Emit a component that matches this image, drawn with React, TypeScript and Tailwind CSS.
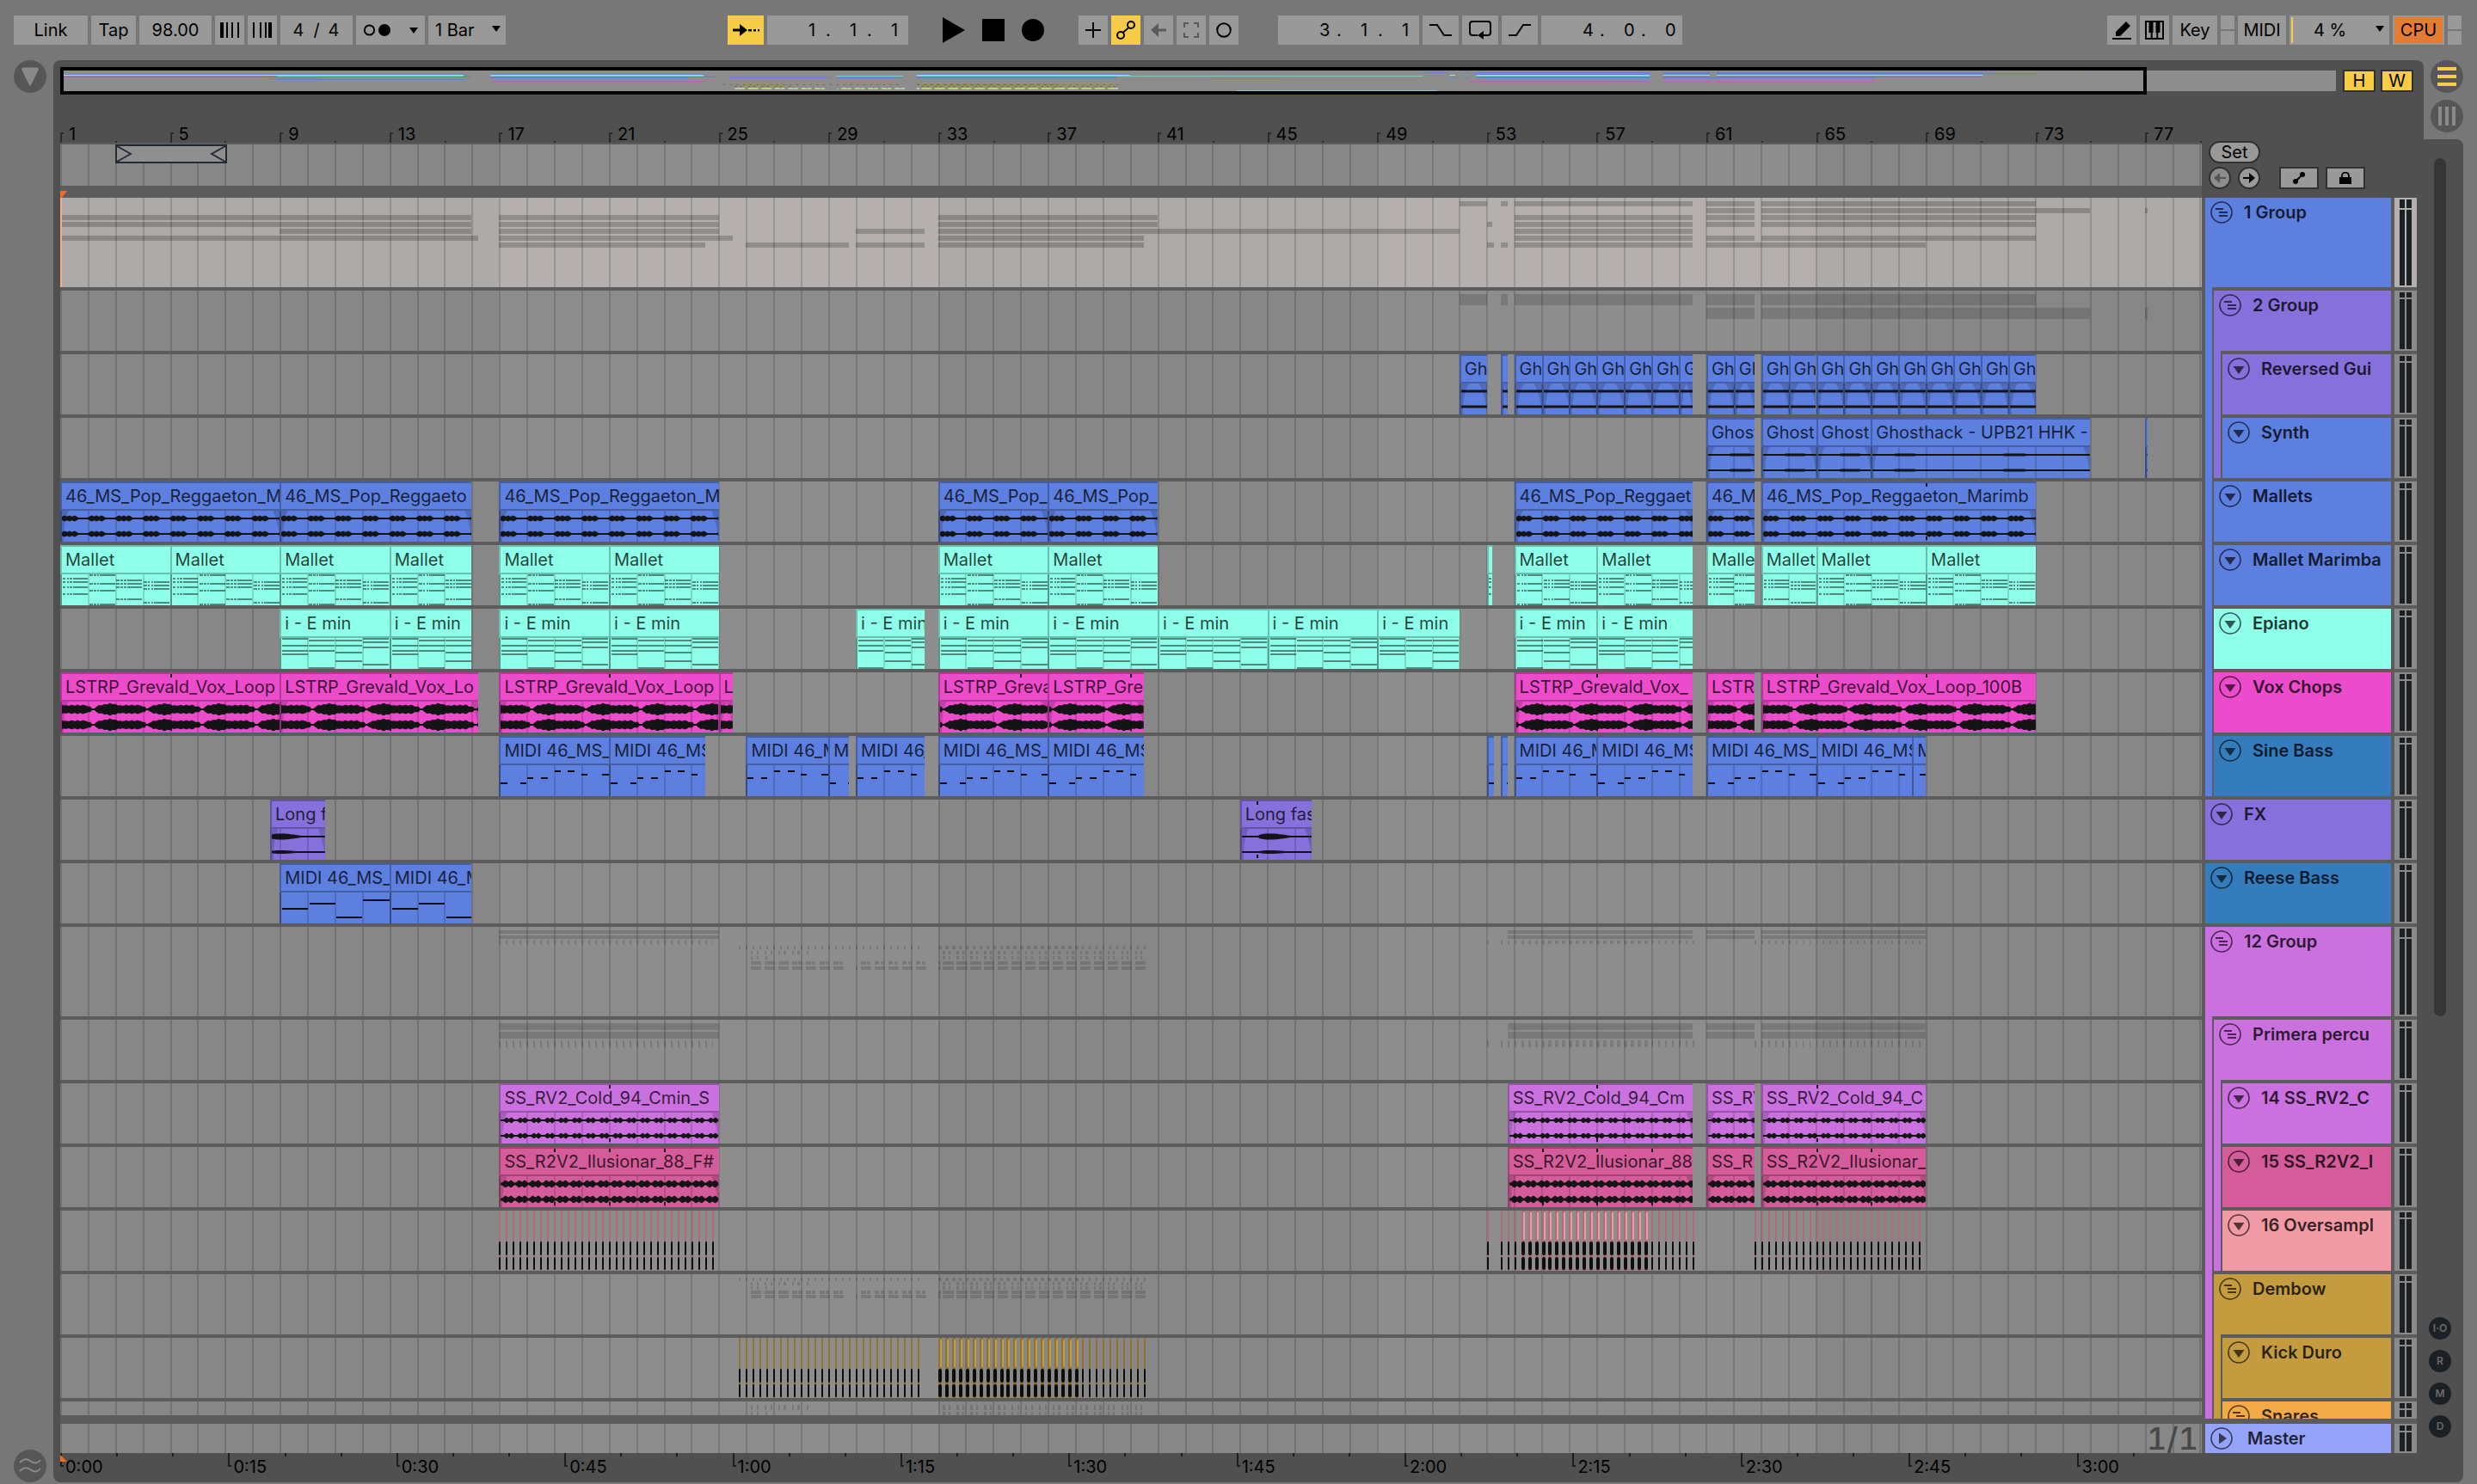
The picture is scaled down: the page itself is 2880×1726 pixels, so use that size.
import React from "react";

type ClipKind =
  | "mallets"
  | "vox"
  | "voxLate"
  | "fade"
  | "fadeLate"
  | "reversed"
  | "synth"
  | "beads"
  | "beadsLoud"
  | "marimba"
  | "epiano"
  | "sine"
  | "reese";

interface Clip {
  start: number;
  end: number;
  title: string;
  kind: ClipKind;
  marks?: number[];
}

interface Hit {
  at: number;
  fat?: boolean;
}

interface Track {
  id: string;
  name: string;
  color: string;
  level: 0 | 1 | 2;
  // colours of the parent groups, drawn as strips on the left
  parents?: string[];
  group?: boolean;
  tall?: boolean;
  selected?: boolean;
  clips?: Clip[];
  hits?: Hit[];
  hitColors?: [string, string];
  // ids of the tracks summed up in a group lane
  summary?: string[];
  summaryPitch?: number;
  summaryHeight?: number;
}

// bars in view, the last one is only just visible
const BARS = 78.06;
const PX = 32;

const BLUE = "#5d7fdf";
const VIOLET = "#8670dc";
const AQUA = "#8effe8";
const MAGENTA = "#ec4bcb";
const STEEL = "#357cbd";
const ORCHID = "#ca71df";
const ROSE = "#d45c9b";
const SALMON = "#f09aa5";
const GOLD = "#c49c3f";
const ORANGE = "#f2aa48";

const pct = (bars: number) => `${(bars / BARS) * 100}%`;

const clip = (
  start: number,
  end: number,
  title: string,
  kind: ClipKind,
  marks?: number[]
): Clip => ({ start, end, title, kind, marks });

const everyBar = (from: number, to: number, last: number): Clip[] => {
  const list: Clip[] = [];
  for (let b = from; b < to; b++) {
    list.push(clip(b, b === to - 1 ? last : b + 1, "Gh", "reversed"));
  }
  return list;
};

const range = (from: number, to: number, fat = false): Hit[] => {
  const list: Hit[] = [];
  for (let t = from; t <= to + 0.001; t += 0.25) list.push({ at: t, fat });
  return list;
};

const tracks: Track[] = [
  {
    id: "g1",
    name: "1 Group",
    color: BLUE,
    level: 0,
    group: true,
    tall: true,
    selected: true,
    summary: ["rev", "synth", "mallets", "marimba", "epiano", "vox", "sine"],
    summaryPitch: 8,
    summaryHeight: 6,
  },
  {
    id: "g2",
    name: "2 Group",
    color: VIOLET,
    level: 1,
    parents: [BLUE],
    group: true,
    summary: ["rev", "synth"],
    summaryPitch: 16,
    summaryHeight: 13,
  },
  {
    id: "rev",
    name: "Reversed Gui",
    color: VIOLET,
    level: 2,
    parents: [BLUE, VIOLET],
    clips: [
      clip(51, 52, "Gh", "reversed"),
      clip(52.5, 52.75, "", "reversed"),
      ...everyBar(53, 60, 59.5),
      ...everyBar(60, 62, 61.75),
      ...everyBar(62, 72, 72),
    ],
  },
  {
    id: "synth",
    name: "Synth",
    color: BLUE,
    level: 2,
    parents: [BLUE, VIOLET],
    clips: [
      clip(60, 61.75, "Ghost", "synth"),
      clip(62, 64, "Ghost", "synth"),
      clip(64, 66, "Ghost", "synth"),
      clip(66, 74, "Ghosthack - UPB21 HHK -", "synth"),
      clip(76, 76.08, "", "synth"),
    ],
  },
  {
    id: "mallets",
    name: "Mallets",
    color: BLUE,
    level: 1,
    parents: [BLUE],
    clips: [
      clip(0, 8, "46_MS_Pop_Reggaeton_M", "mallets"),
      clip(8, 15, "46_MS_Pop_Reggaeto", "mallets"),
      clip(16, 24, "46_MS_Pop_Reggaeton_M", "mallets"),
      clip(32, 36, "46_MS_Pop_", "mallets"),
      clip(36, 40, "46_MS_Pop_", "mallets"),
      clip(53, 59.5, "46_MS_Pop_Reggaet", "mallets"),
      clip(60, 61.75, "46_M", "mallets"),
      clip(62, 72, "46_MS_Pop_Reggaeton_Marimb", "mallets", [68]),
    ],
  },
  {
    id: "marimba",
    name: "Mallet Marimba",
    color: BLUE,
    level: 1,
    parents: [BLUE],
    clips: [
      clip(0, 4, "Mallet", "marimba"),
      clip(4, 8, "Mallet", "marimba"),
      clip(8, 12, "Mallet", "marimba"),
      clip(12, 15, "Mallet", "marimba"),
      clip(16, 20, "Mallet", "marimba"),
      clip(20, 24, "Mallet", "marimba"),
      clip(32, 36, "Mallet", "marimba"),
      clip(36, 40, "Mallet", "marimba"),
      clip(52, 52.2, "", "marimba"),
      clip(53, 56, "Mallet", "marimba"),
      clip(56, 59.5, "Mallet", "marimba"),
      clip(60, 61.75, "Malle", "marimba"),
      clip(62, 64, "Mallet", "marimba"),
      clip(64, 68, "Mallet", "marimba"),
      clip(68, 72, "Mallet", "marimba"),
    ],
  },
  {
    id: "epiano",
    name: "Epiano",
    color: AQUA,
    level: 1,
    parents: [BLUE],
    clips: [
      clip(8, 12, "i - E min", "epiano"),
      clip(12, 15, "i - E min", "epiano"),
      clip(16, 20, "i - E min", "epiano"),
      clip(20, 24, "i - E min", "epiano"),
      clip(29, 31.5, "i - E min", "epiano"),
      clip(32, 36, "i - E min", "epiano"),
      clip(36, 40, "i - E min", "epiano"),
      clip(40, 44, "i - E min", "epiano"),
      clip(44, 48, "i - E min", "epiano"),
      clip(48, 51, "i - E min", "epiano"),
      clip(53, 56, "i - E min", "epiano"),
      clip(56, 59.5, "i - E min", "epiano"),
    ],
  },
  {
    id: "vox",
    name: "Vox Chops",
    color: MAGENTA,
    level: 1,
    parents: [BLUE],
    clips: [
      clip(0, 8, "LSTRP_Grevald_Vox_Loop", "vox", [4]),
      clip(8, 15.25, "LSTRP_Grevald_Vox_Lo", "vox", [12]),
      clip(16, 24, "LSTRP_Grevald_Vox_Loop", "vox", [20]),
      clip(24, 24.5, "L", "vox"),
      clip(32, 36, "LSTRP_Greva", "voxLate", [35]),
      clip(36, 39.5, "LSTRP_Gre", "voxLate", [39]),
      clip(53, 59.5, "LSTRP_Grevald_Vox_", "voxLate", [56]),
      clip(60, 61.75, "LSTR", "vox"),
      clip(62, 72, "LSTRP_Grevald_Vox_Loop_100B", "vox", [64, 68]),
    ],
  },
  {
    id: "sine",
    name: "Sine Bass",
    color: STEEL,
    level: 1,
    parents: [BLUE],
    clips: [
      clip(16, 20, "MIDI 46_MS_", "sine"),
      clip(20, 23.5, "MIDI 46_MS", "sine"),
      clip(25, 28, "MIDI 46_M", "sine"),
      clip(28, 28.75, "M", "sine"),
      clip(29, 31.5, "MIDI 46_", "sine"),
      clip(32, 36, "MIDI 46_MS_", "sine"),
      clip(36, 39.5, "MIDI 46_MS", "sine"),
      clip(52, 52.25, "", "sine"),
      clip(52.5, 52.75, "", "sine"),
      clip(53, 56, "MIDI 46_M", "sine"),
      clip(56, 59.5, "MIDI 46_MS", "sine"),
      clip(60, 64, "MIDI 46_MS_", "sine"),
      clip(64, 67.5, "MIDI 46_MS", "sine"),
      clip(67.5, 68, "M", "sine"),
    ],
  },
  {
    id: "fx",
    name: "FX",
    color: VIOLET,
    level: 0,
    clips: [
      clip(7.65, 9.65, "Long f", "fade"),
      clip(43, 45.6, "Long fas", "fadeLate", [43.6]),
    ],
  },
  {
    id: "reese",
    name: "Reese Bass",
    color: STEEL,
    level: 0,
    clips: [
      clip(8, 12, "MIDI 46_MS_", "reese"),
      clip(12, 15, "MIDI 46_M", "reese"),
    ],
  },
  {
    id: "g12",
    name: "12 Group",
    color: ORCHID,
    level: 0,
    group: true,
    tall: true,
    summary: ["cold", "ilu", "over", "kick", "snare", "rim", "hat", "shaker"],
    summaryPitch: 6,
    summaryHeight: 4,
  },
  {
    id: "primera",
    name: "Primera percu",
    color: ORCHID,
    level: 1,
    parents: [ORCHID],
    group: true,
    summary: ["cold", "ilu", "over"],
    summaryPitch: 10,
    summaryHeight: 8,
  },
  {
    id: "cold",
    name: "14 SS_RV2_C",
    color: ORCHID,
    level: 2,
    parents: [ORCHID, ORCHID],
    clips: [
      clip(16, 24, "SS_RV2_Cold_94_Cmin_S", "beads", [20]),
      clip(52.75, 59.5, "SS_RV2_Cold_94_Cm", "beads", [56]),
      clip(60, 61.75, "SS_RV", "beads"),
      clip(62, 68, "SS_RV2_Cold_94_C", "beads", [64]),
    ],
  },
  {
    id: "ilu",
    name: "15 SS_R2V2_I",
    color: ROSE,
    level: 2,
    parents: [ORCHID, ORCHID],
    clips: [
      clip(16, 24, "SS_R2V2_Ilusionar_88_F#", "beadsLoud", [18, 20, 22]),
      clip(52.75, 59.5, "SS_R2V2_Ilusionar_88", "beadsLoud", [54, 56, 58]),
      clip(60, 61.75, "SS_R2", "beadsLoud"),
      clip(62, 68, "SS_R2V2_Ilusionar_", "beadsLoud", [64, 66]),
    ],
  },
  {
    id: "over",
    name: "16 Oversampl",
    color: SALMON,
    level: 2,
    parents: [ORCHID, ORCHID],
    hitColors: ["#b46b78", "#f09aa5"],
    hits: [
      ...range(16, 23.75),
      { at: 52 },
      ...range(52.5, 53),
      ...range(53.25, 57.75, true),
      ...range(58, 59.5),
      ...range(61.75, 67.75),
    ],
  },
  {
    id: "dembow",
    name: "Dembow",
    color: GOLD,
    level: 1,
    parents: [ORCHID],
    group: true,
    summary: ["kick", "snare", "rim", "hat", "shaker"],
    summaryPitch: 5,
    summaryHeight: 4,
  },
  {
    id: "kick",
    name: "Kick Duro",
    color: GOLD,
    level: 2,
    parents: [ORCHID, GOLD],
    hitColors: ["#93722f", "#c49c3f"],
    hits: [...range(24.75, 31.25), ...range(32, 37, true), ...range(37.25, 39.5)],
  },
];

const snares: Track = {
  id: "snares",
  name: "Snares",
  color: ORANGE,
  level: 2,
  parents: [ORCHID, GOLD],
  group: true,
  summary: ["snare", "rim"],
  summaryPitch: 8,
  summaryHeight: 6,
};

// Blocks of the lanes that are scrolled out of view, still seen in summaries
const pairs = (from: number, count: number): number[][] =>
  Array.from({ length: count }, (_, i) => [
    [from + i * 0.5, from + i * 0.5 + 0.07],
    [from + i * 0.5 + 0.2, from + i * 0.5 + 0.27],
  ]).flat();

const blocks = (from: number, count: number): number[][] =>
  Array.from({ length: count }, (_, i) => [
    from + i * 0.5,
    from + i * 0.5 + 0.38,
  ]);

const splitBlocks = (from: number, count: number): number[][] =>
  Array.from({ length: count }, (_, i) => [
    [from + i * 0.5, from + i * 0.5 + 0.18],
    [from + i * 0.5 + 0.23, from + i * 0.5 + 0.36],
  ]).flat();

const hidden: Record<string, number[][]> = {
  snare: [...pairs(25.18, 4), [27.2, 27.27], ...pairs(32.18, 15)],
  rim: [...pairs(25.18, 1), [25.7, 25.77], ...pairs(32.18, 15)],
  hat: [
    ...blocks(25.18, 3),
    ...splitBlocks(26.68, 4),
    ...splitBlocks(29.18, 5),
    [32, 32.1],
    ...blocks(32.18, 15),
  ],
  shaker: [
    ...blocks(25.18, 7),
    [29, 29.07],
    ...blocks(29.18, 5),
    [32, 32.1],
    ...blocks(32.18, 15),
  ],
};

// Clips of one track joined into the spans that a group lane shows
const spansOf = (id: string): number[][] => {
  if (hidden[id]) return hidden[id];
  const track = tracks.find((t) => t.id === id);
  if (!track) return [];
  if (track.hits) {
    return track.hits.map((h) => [h.at, h.at + (h.fat ? 0.12 : 0.06)]);
  }
  const spans: number[][] = [];
  (track.clips ?? []).forEach((c) => {
    const last = spans[spans.length - 1];
    if (last && last[1] === c.start) last[1] = c.end;
    else spans.push([c.start, c.end]);
  });
  return spans;
};

const clipColor = (kind: ClipKind): string => {
  if (kind === "marimba" || kind === "epiano") return AQUA;
  if (kind === "vox" || kind === "voxLate") return MAGENTA;
  if (kind === "fade" || kind === "fadeLate") return VIOLET;
  if (kind === "beads") return ORCHID;
  if (kind === "beadsLoud") return ROSE;
  return BLUE;
};

const voxLevel = (u: number, offset: number): number => {
  const v = (((u - offset) % 2) + 2) % 2;
  const rough = Math.sin(v * 31) * 0.6;
  if (v < 0.1 || v > 1.96) return 1;
  if (v < 0.25) return 2 + (v - 0.1) * 16;
  if (v < 0.7) return 4.4 + (v - 0.25) * 5.5 + rough;
  if (v < 1.15) return 6.8 - (v - 0.7) * 7 + rough;
  if (v < 1.8) return 4.8 + rough;
  return 3.2;
};

// fast rise, slow decay
const swell = (x: number): number =>
  x <= 0 || x >= 1 ? 1 : 1 + 2.6 * Math.sin(Math.PI * Math.pow(x, 0.7));

const level = (kind: ClipKind, u: number): number => {
  const f = u % 1;
  switch (kind) {
    case "mallets":
      return f < 0.56 ? 1.8 + 1.6 * Math.abs(Math.sin(f * 17)) : 1;
    case "vox":
      return voxLevel(u, 1.1);
    case "voxLate":
      return voxLevel(u, 0.1);
    case "fade":
      return swell((u + 0.1) / 1.2);
    case "fadeLate":
      return swell((u - 0.6) / 1.2);
    case "reversed":
      return 1.5;
    case "synth":
      return u % 4 > 0.8 && u % 4 < 1.6 ? 1.6 : 1;
    case "beads": {
      const g = u % 0.5;
      return g > 0.14 && g < 0.48
        ? 1 + 2.4 * Math.abs(Math.sin((g - 0.14) * 18.5))
        : 1;
    }
    case "beadsLoud": {
      const g = u % 0.5;
      return g > 0.08 && g < 0.48
        ? 1.6 + 2.8 * Math.abs(Math.sin((g - 0.08) * 15.7))
        : 1.6;
    }
    default:
      return 1;
  }
};

const wavePath = (
  kind: ClipKind,
  length: number,
  mid: number,
  gain = 1
): string => {
  const steps = Math.max(2, Math.round(length * 20));
  const top: string[] = [];
  const bottom: string[] = [];
  for (let i = 0; i <= steps; i++) {
    const u = (i / steps) * length;
    const a = Math.max(1, level(kind, u) * gain);
    top.push(`${(u * PX).toFixed(1)},${(mid - a).toFixed(1)}`);
    bottom.unshift(`${(u * PX).toFixed(1)},${(mid + a).toFixed(1)}`);
  }
  return `M${top.join("L")}L${bottom.join("L")}Z`;
};

const marimbaRows = [
  [4, 8, 14, 22],
  [0, 10, 18, 34],
  [6, 10, 14, 28],
  [8, 12, 16, 32],
];
const epianoRows = [
  [0, 8, 14, 18],
  [2, 8, 14, 34],
  [2, 8, 16, 26],
  [0, 4, 10, 30],
];
const sineRows = [20, 14, 6, 10];
const sineSteps = [
  [0, 0.25, 0.72, 0.97],
  [0, 0.22, 0.5, 0.75],
  [0, 0.22, 0.5, 0.75],
  [0, 0.22, 0.75, 1],
];
const reeseRows = [18, 12, 28, 8];

// [x, y, width] in bars and pixels, relative to the clip
const notesOf = (c: Clip): number[][] => {
  const notes: number[][] = [];
  for (let b = Math.floor(c.start); b < c.end; b++) {
    const x = b - c.start;
    const phase = b % 4;
    if (c.kind === "marimba") {
      marimbaRows[phase].forEach((y) => {
        notes.push([x + 0.02, y, 0.12], [x + 0.18, y, 0.08]);
        notes.push([x + 0.3, y, 0.08], [x + 0.41, y, 0.56]);
      });
    } else if (c.kind === "epiano") {
      epianoRows[phase].forEach((y) => notes.push([x + 0.02, y, 0.96]));
    } else if (c.kind === "sine") {
      const s = sineSteps[phase];
      notes.push([x + s[0], sineRows[phase], s[1] - s[0]]);
      notes.push([x + s[2], sineRows[phase], s[3] - s[2]]);
    } else {
      notes.push([x + 0.04, reeseRows[phase], 0.96]);
    }
  }
  return notes;
};

const isMidi = (kind: ClipKind) =>
  kind === "marimba" || kind === "epiano" || kind === "sine" || kind === "reese";

const ClipBody: React.FC<{ item: Clip }> = ({ item }) => {
  const length = item.end - item.start;
  const w = length * PX;
  const soft = item.kind === "marimba" || item.kind === "epiano";
  const swells = item.kind === "fade" || item.kind === "fadeLate";
  const fade = Math.min(item.kind === "reversed" ? 10 : 8, w / 2);
  return (
    <svg
      className="block h-9 w-full"
      viewBox={`0 0 ${w} 36`}
      preserveAspectRatio="none"
      aria-hidden="true"
    >
      {isMidi(item.kind) ? (
        notesOf(item).map(([x, y, width], i) => (
          <rect
            key={i}
            x={x * PX}
            y={y}
            width={width * PX}
            height={2}
            fill="#000"
            fillOpacity={soft ? 0.45 : 0.9}
            shapeRendering="crispEdges"
          />
        ))
      ) : (
        <>
          <path
            d={`M0 0H${fade}Q2 10 2 36H0ZM${w} 0H${w - fade}Q${w - 1} 16 ${w} 36Z`}
            fill="#000"
            fillOpacity={0.16}
          />
          <path d={wavePath(item.kind, length, 9)} fill="#141414" />
          <path
            d={wavePath(item.kind, length, 27, swells ? 0.55 : 1)}
            fill="#141414"
          />
        </>
      )}
    </svg>
  );
};

const ClipView: React.FC<{ item: Clip }> = ({ item }) => (
  <div
    className="absolute inset-y-0 overflow-hidden"
    style={{
      left: pct(item.start),
      width: pct(item.end - item.start),
      backgroundColor: clipColor(item.kind),
    }}
  >
    <div
      className="relative z-20 h-[34px] overflow-hidden border-y-2 border-l-2 border-black/25 pl-1 text-xl leading-[30px] whitespace-nowrap text-black/75"
      style={{ backgroundColor: clipColor(item.kind) }}
    >
      {item.title}
    </div>
    <div className="h-9 border-l-2 border-black/30">
      <ClipBody item={item} />
    </div>
    {item.marks?.map((m) => (
      <div
        key={m}
        className="absolute inset-y-0.5 z-20 flex w-0.5 flex-col justify-between"
        style={{
          left: `${((m - item.start) / (item.end - item.start)) * 100}%`,
        }}
      >
        <span className="h-1 bg-[#141414]" />
        <span className="h-1 bg-[#141414]" />
      </div>
    ))}
  </div>
);

const HitView: React.FC<{ hit: Hit; colors: [string, string] }> = ({
  hit,
  colors,
}) => (
  <div
    className={`absolute inset-y-0 z-20 flex flex-col ${
      hit.fat ? "w-1" : "w-0.5"
    }`}
    style={{ left: pct(hit.at), backgroundColor: colors[0] }}
  >
    <span
      className="mt-0.5 ml-0.5 h-8"
      style={{ backgroundColor: hit.fat ? colors[1] : colors[0] }}
    />
    <span className="mt-0.5 h-4 rounded-xs bg-[#0d0d0d]" />
    <span className="mt-0.5 h-[15px] rounded-xs bg-[#0d0d0d]" />
  </div>
);

// Every sixteen bars the lane changes its shade
const Shades: React.FC<{ selected?: boolean }> = ({ selected }) => (
  <div className="absolute inset-0 flex">
    {[0, 16, 32, 48, 64].map((b, i) => (
      <div
        key={b}
        className={
          selected
            ? i % 2
              ? "bg-[#b5b0af]"
              : "bg-[#acaba9]"
            : i % 2
              ? "bg-[#8d8d8d]"
              : "bg-[#878787]"
        }
        style={{ width: pct(Math.min(16, BARS - b)) }}
      />
    ))}
  </div>
);

const GridLines: React.FC = () => (
  <div className="flex h-full overflow-hidden">
    {Array.from({ length: 79 }, (_, i) => (
      <div
        key={i}
        className="shrink-0 border-l-2 border-black/15"
        style={{ width: pct(1) }}
      />
    ))}
  </div>
);

const Lane: React.FC<{ track: Track }> = ({ track }) => (
  <div className="relative h-full overflow-hidden">
    <Shades selected={track.selected} />
    {track.summary?.map((id, row) =>
      spansOf(id).map(([from, to]) => (
        <div
          key={`${id}-${from}`}
          className={`absolute ${track.selected ? "bg-black/20" : "bg-black/14"}`}
          style={{
            left: pct(from),
            width: pct(to - from),
            top: 4 + row * (track.summaryPitch ?? 8),
            height: track.summaryHeight,
          }}
        />
      ))
    )}
    {track.clips?.map((c) => (
      <ClipView key={c.start} item={c} />
    ))}
    {track.hits?.map((h) => (
      <HitView
        key={h.at}
        hit={h}
        colors={track.hitColors ?? ["#777777", "#999999"]}
      />
    ))}
  </div>
);

const FoldIcon: React.FC<{ kind: "group" | "open" | "closed" }> = ({ kind }) => (
  <svg viewBox="0 0 26 26" className="block size-[26px]" aria-hidden="true">
    <circle
      cx="13"
      cy="13"
      r="12"
      fill="none"
      stroke="currentColor"
      strokeWidth="1.6"
    />
    {kind === "group" && (
      <path
        d="M6 9h9M10 13h10M10 17h10"
        stroke="currentColor"
        strokeWidth="1.8"
      />
    )}
    {kind === "open" && <path d="M6.5 10h13L13 19z" fill="currentColor" />}
    {kind === "closed" && <path d="M10 6.5v13l9-6.5z" fill="currentColor" />}
  </svg>
);

const TrackHeader: React.FC<{ track: Track }> = ({ track }) => (
  <div
    className="flex h-full min-w-0 flex-1 items-start overflow-hidden pt-1 pl-1.5"
    style={{ backgroundColor: track.color }}
  >
    <button
      type="button"
      aria-label={`Fold ${track.name}`}
      className="shrink-0 text-black/65"
    >
      <FoldIcon kind={track.group ? "group" : "open"} />
    </button>
    <h3 className="ml-[13px] text-xl leading-[26px] font-semibold whitespace-nowrap text-black/80">
      {track.name}
    </h3>
  </div>
);

const Meter: React.FC<{ tall?: boolean; selected?: boolean }> = ({
  tall,
  selected,
}) => (
  <div
    className={`flex h-full gap-0.5 px-1.5 py-0.5 ${
      selected ? "bg-[#b5b0af]" : "bg-[#8a8a8a]"
    }`}
  >
    {[0, 1].map((i) => (
      <div key={i} className="flex w-1.5 flex-col gap-0.5">
        <span className={`bg-[#1a2024] ${tall ? "h-2.5" : "h-1.5"}`} />
        <span className="flex-1 bg-[#1a2024]" />
      </div>
    ))}
  </div>
);

const rowHeight = (track: Track, first?: boolean): string => {
  if (track.id === "snares") return "h-6";
  if (track.tall) return first ? "h-[104px]" : "h-[108px]";
  return "h-[74px]";
};

const TrackRow: React.FC<{ track: Track; first?: boolean }> = ({
  track,
  first,
}) => {
  const gap = first ? "" : "pt-1";
  return (
    <div className={`flex ${rowHeight(track, first)}`}>
      <div className="flex min-w-0 flex-1 flex-col">
        {!first && <div className="relative z-20 h-1 shrink-0 bg-[#5c5c5c]" />}
        <div className="min-h-0 flex-1">
          <Lane track={track} />
        </div>
        {track.id === "snares" && (
          <div className="relative z-20 h-1 shrink-0 bg-[#5c5c5c]" />
        )}
      </div>
      <div className="ml-1 flex w-[216px] gap-0.5">
        {track.parents?.map((color, i) => (
          <div
            key={i}
            className="w-2 shrink-0"
            style={{ backgroundColor: color }}
          />
        ))}
        <div className={`min-w-0 flex-1 ${gap}`}>
          <TrackHeader track={track} />
        </div>
      </div>
      <div className={`ml-1 w-[26px] ${gap}`}>
        <Meter tall={track.tall} selected={track.selected} />
      </div>
    </div>
  );
};

const box = "h-[34px] shrink-0 bg-[#999999] text-xl text-black";
const iconBox = `${box} flex items-center justify-center`;

const IconButton: React.FC<{
  label: string;
  className: string;
  children: React.ReactNode;
}> = ({ label, className, children }) => (
  <button
    type="button"
    aria-label={label}
    className={`flex h-[34px] shrink-0 items-center justify-center ${className}`}
  >
    {children}
  </button>
);

const PositionField: React.FC<{ label: string; values: string[] }> = ({
  label,
  values,
}) => (
  <div className={`${box} flex w-[164px] items-center justify-end`}>
    {values.map((v, i) => (
      <React.Fragment key={i}>
        <input
          aria-label={`${label} ${i + 1}`}
          defaultValue={v}
          className="w-5 bg-transparent p-0"
        />
        {i < 2 && <span className="w-7">.</span>}
      </React.Fragment>
    ))}
  </div>
);

const Caret: React.FC = () => (
  <svg viewBox="0 0 10 8" className="h-2 w-2.5" aria-hidden="true">
    <path d="M0 1h10L5 8z" />
  </svg>
);

const Toolbar: React.FC = () => (
  <header className="flex py-[18px] pr-[18px] pl-4">
    <div className="flex gap-1">
      <button type="button" className={`${box} w-[86px]`}>
        Link
      </button>
      <button type="button" className={`${box} w-[52px]`}>
        Tap
      </button>
      <input
        aria-label="Tempo"
        defaultValue="98.00"
        className={`${box} w-[84px] text-center`}
      />
      <IconButton label="Nudge down" className="w-[34px] bg-[#999999]">
        <svg viewBox="0 0 34 34" className="size-[34px]" aria-hidden="true">
          <path d="M6 8h4v18H6zM13 8h2v18h-2zM19 8h2v18h-2zM26 8h2v18h-2z" />
        </svg>
      </IconButton>
      <IconButton label="Nudge up" className="w-[34px] bg-[#999999]">
        <svg viewBox="0 0 34 34" className="size-[34px]" aria-hidden="true">
          <path d="M6 8h2v18H6zM14 8h2v18h-2zM20 8h2v18h-2zM24 8h4v18h-4z" />
        </svg>
      </IconButton>
      <div className={`${iconBox} w-[84px] gap-2.5`}>
        <input
          aria-label="Beats per bar"
          defaultValue="4"
          className="w-3.5 bg-transparent"
        />
        <span>/</span>
        <input
          aria-label="Beat unit"
          defaultValue="4"
          className="w-3.5 bg-transparent"
        />
      </div>
      <IconButton label="Metronome" className="w-20 gap-5 bg-[#999999]">
        <svg viewBox="0 0 34 16" className="h-4 w-[34px]" aria-hidden="true">
          <circle
            cx="7.5"
            cy="8"
            r="5.6"
            fill="none"
            stroke="#000"
            strokeWidth="2"
          />
          <circle cx="25" cy="8" r="7" />
        </svg>
        <Caret />
      </IconButton>
      <div className="relative">
        <select
          aria-label="Quantization"
          className={`${box} w-[90px] appearance-none pl-2`}
        >
          <option>1 Bar</option>
        </select>
        <span className="pointer-events-none absolute top-[11px] right-1.5">
          <Caret />
        </span>
      </div>
    </div>

    <div className="ml-[258px] flex">
      <div className="flex gap-1">
        <IconButton label="Follow" className="w-[42px] bg-[#f8cd46]">
          <svg viewBox="0 0 34 20" className="h-5 w-[34px]" aria-hidden="true">
            <path d="M2 8.5h8V3l9 7-9 7v-5.500H2zM20 9h4v2.500h-4zM26 9h3v2.500h-3zM31 9h2v2.500h-2z" />
          </svg>
        </IconButton>
        <PositionField label="Position" values={["1", "1", "1"]} />
      </div>
      <div className="ml-10 flex gap-5">
        <IconButton label="Play" className="w-[26px]">
          <svg viewBox="0 0 26 30" className="h-[30px] w-[26px]">
            <path d="M0 0l26 15L0 30z" />
          </svg>
        </IconButton>
        <IconButton label="Stop" className="w-[26px]">
          <span className="size-[26px] bg-black" />
        </IconButton>
        <IconButton label="Record" className="w-[26px]">
          <span className="size-[26px] rounded-full bg-black" />
        </IconButton>
      </div>
      <div className="ml-10 flex gap-1">
        <IconButton label="Overdub" className="w-[34px] bg-[#999999]">
          <svg viewBox="0 0 18 18" className="size-[18px]">
            <path d="M8 0h2v8h8v2h-8v8H8v-8H0V8h8z" />
          </svg>
        </IconButton>
        <IconButton label="Automation arm" className="w-[34px] bg-[#f8cd46]">
          <svg
            viewBox="0 0 24 24"
            className="size-6"
            fill="none"
            stroke="#000"
            strokeWidth="2"
          >
            <circle cx="6" cy="18" r="4" />
            <circle cx="18" cy="6" r="4" />
            <path d="M8.500 15l7-6" />
          </svg>
        </IconButton>
        <IconButton
          label="Re-enable automation"
          className="w-[34px] bg-[#999999] text-[#5a5a5a]"
        >
          <svg viewBox="0 0 18 16" className="h-4 w-[18px]" fill="currentColor">
            <path d="M0 8l9-8v6.500h9v3H9V16z" />
          </svg>
        </IconButton>
        <IconButton
          label="Capture MIDI"
          className="w-[34px] bg-[#999999] text-[#5a5a5a]"
        >
          <svg
            viewBox="0 0 20 20"
            className="size-5"
            fill="none"
            stroke="currentColor"
            strokeWidth="2"
          >
            <path d="M2 7V2h5M13 2h5v5M18 13v5h-5M7 18H2v-5" />
          </svg>
        </IconButton>
        <IconButton label="Session record" className="w-[34px] bg-[#999999]">
          <svg viewBox="0 0 18 18" className="size-[18px]">
            <circle
              cx="9"
              cy="9"
              r="7.800"
              fill="none"
              stroke="#000"
              strokeWidth="2"
            />
          </svg>
        </IconButton>
      </div>
      <div className="ml-[46px] flex gap-1">
        <PositionField label="Loop start" values={["3", "1", "1"]} />
        <IconButton label="Punch in" className="w-[42px] bg-[#999999]">
          <svg
            viewBox="0 0 28 16"
            className="h-4 w-7"
            fill="none"
            stroke="#000"
            strokeWidth="2"
          >
            <path d="M1 2h9l8 12h9" />
          </svg>
        </IconButton>
        <IconButton label="Loop" className="w-[42px] bg-[#999999]">
          <svg
            viewBox="0 0 28 24"
            className="h-6 w-7"
            fill="none"
            stroke="#000"
            strokeWidth="2"
          >
            <path d="M11 18H5a3 3 0 01-3-3V5a3 3 0 013-3h18a3 3 0 013 3v10a3 3 0 01-3 3h-5" />
            <path d="M11 18l7-5v10z" fill="#000" stroke="none" />
          </svg>
        </IconButton>
        <IconButton label="Punch out" className="w-[42px] bg-[#999999]">
          <svg
            viewBox="0 0 28 16"
            className="h-4 w-7"
            fill="none"
            stroke="#000"
            strokeWidth="2"
          >
            <path d="M1 14h9l8-12h9" />
          </svg>
        </IconButton>
        <PositionField label="Loop length" values={["4", "0", "0"]} />
      </div>
    </div>

    <div className="ml-auto flex gap-1">
      <IconButton label="Draw mode" className="w-[34px] bg-[#999999]">
        <svg viewBox="0 0 22 22" className="size-[22px]" aria-hidden="true">
          <path d="M4 18v-5L16 1l5 5L9 18zM0 20h22v2H0z" />
        </svg>
      </IconButton>
      <IconButton
        label="Computer MIDI keyboard"
        className="w-[34px] bg-[#999999]"
      >
        <svg viewBox="0 0 22 22" className="size-[22px]" aria-hidden="true">
          <path
            d="M1 1h20v20H1zM7.700 12v9M14.300 12v9"
            fill="none"
            stroke="#000"
            strokeWidth="2"
          />
          <path d="M4.500 1h5v13h-5zM12.500 1h5v13h-5z" />
        </svg>
      </IconButton>
      <button type="button" className={`${box} w-[52px]`}>
        Key
      </button>
      <div className="grid w-4 grid-rows-2 gap-0.5">
        <span className="bg-[#999999]" />
        <span className="bg-[#999999]" />
      </div>
      <button type="button" className={`${box} w-14`}>
        MIDI
      </button>
      <div className="relative">
        <select
          aria-label="Processor load"
          className={`${box} w-[116px] appearance-none pl-7`}
        >
          <option>4 %</option>
        </select>
        <span className="absolute inset-y-0.5 left-0.5 w-0.5 bg-[#f8cd46]" />
        <span className="pointer-events-none absolute top-[11px] right-1.5">
          <Caret />
        </span>
      </div>
      <button
        type="button"
        className="h-[34px] w-[60px] border-2 border-[#999999] bg-[#e57c33] text-xl"
      >
        CPU
      </button>
      <div className="grid w-4 grid-rows-2 gap-0.5">
        <span className="bg-[#999999]" />
        <span className="bg-[#999999]" />
      </div>
    </div>
  </header>
);

// vertical place and colour of each line in the overview strip
const overviewRows: [string, number, string][] = [
  ["rev", 2, BLUE],
  ["synth", 3, BLUE],
  ["mallets", 4, BLUE],
  ["marimba", 5, AQUA],
  ["epiano", 6, "#6fdcc8"],
  ["vox", 7, "#b552b0"],
  ["sine", 8, BLUE],
  ["fx", 9, VIOLET],
  ["reese", 10, BLUE],
  ["cold", 12, "#b866c8"],
  ["ilu", 13, ROSE],
  ["over", 14, "#d06a78"],
  ["kick", 16, "#7c5a1e"],
  ["snare", 18, "#8a4a1c"],
  ["hat", 20, "#e8d070"],
  ["shaker", 21, "#7fdfe0"],
];

const Overview: React.FC = () => (
  <div className="relative h-8 flex-1 py-1">
    <div className="h-full bg-[#8d8d8d]" />
    <div className="absolute inset-y-0 left-0 w-11/12 border-4 border-black">
      <svg
        className="block h-full w-full"
        viewBox="0 0 78 24"
        preserveAspectRatio="none"
        aria-hidden="true"
      >
        {overviewRows.map(([id, y, color]) =>
          spansOf(id).map(([from, to]) => (
            <rect
              key={`${id}-${from}`}
              x={from}
              y={y}
              width={to - from}
              height={id === "mallets" ? 2 : 1}
              fill={color}
              fillOpacity={0.85}
            />
          ))
        )}
        <rect x={44} y={23} width={7.5} height={1} fill="#8fb8f0" />
      </svg>
    </div>
  </div>
);

const BarRuler: React.FC = () => (
  <div className="relative h-14 text-xl text-black">
    {Array.from({ length: 20 }, (_, i) => (
      <div
        key={i}
        className="absolute bottom-0 h-3 w-1 border-t-2 border-l-2 border-[#2b2b2b]"
        style={{ left: pct(i * 4) }}
      >
        <span className="absolute -top-3 left-2 leading-6">{i * 4 + 1}</span>
      </div>
    ))}
    {Array.from({ length: 20 }, (_, i) => (
      <div
        key={i}
        className="absolute bottom-0 size-0.5 bg-[#2b2b2b]"
        style={{ left: pct(i * 4 + 2) }}
      />
    ))}
  </div>
);

const LoopBrace: React.FC = () => (
  <div
    className="absolute top-0 flex h-[22px] justify-between border-2 border-[#232a36] bg-[#8f8f8f]"
    style={{ left: pct(2), width: pct(4.08) }}
  >
    <svg viewBox="0 0 18 18" className="h-full w-[18px]" aria-hidden="true">
      <path d="M0 0l16 9L0 18" fill="none" stroke="#232a36" strokeWidth="1.800" />
    </svg>
    <svg viewBox="0 0 18 18" className="h-full w-[18px]" aria-hidden="true">
      <path d="M18 0L2 9l16 9" fill="none" stroke="#232a36" strokeWidth="1.800" />
    </svg>
  </div>
);

const LocatorControls: React.FC = () => (
  <div className="w-[258px] pt-[54px] pl-2">
    <button
      type="button"
      className="block h-[26px] w-[60px] rounded-full border-2 border-[#303030] bg-[#999999] text-xl leading-[22px]"
    >
      Set
    </button>
    <div className="mt-1 flex items-center">
      <button
        type="button"
        aria-label="Previous locator"
        className="flex size-[26px] items-center justify-center rounded-full border-2 border-[#303030] bg-[#8c8c8c]"
      >
        <svg viewBox="0 0 14 12" className="h-3 w-3.5" fill="#555555">
          <path d="M0 6l7-6v5h7v2H7v5z" />
        </svg>
      </button>
      <button
        type="button"
        aria-label="Next locator"
        className="ml-2 flex size-[26px] items-center justify-center rounded-full border-2 border-[#303030] bg-[#999999]"
      >
        <svg viewBox="0 0 14 12" className="h-3 w-3.5">
          <path d="M14 6L7 0v5H0v2h7v5z" />
        </svg>
      </button>
      <button
        type="button"
        aria-label="Automation mode"
        className="ml-[22px] flex h-[26px] w-[46px] items-center justify-center border-2 border-[#303030] bg-[#999999]"
      >
        <svg viewBox="0 0 14 14" className="size-3.5">
          <circle cx="3" cy="11" r="3" />
          <circle cx="11" cy="3" r="3" />
          <path d="M3 11l8-8" stroke="#000" strokeWidth="2" />
        </svg>
      </button>
      <button
        type="button"
        aria-label="Lock envelopes"
        className="ml-2 flex h-[26px] w-[46px] items-center justify-center border-2 border-[#303030] bg-[#999999]"
      >
        <svg viewBox="0 0 14 14" className="size-3.5">
          <path d="M0 6h14v8H0z" />
          <path
            d="M3 7V4.500a4 4 0 018 0V7"
            fill="none"
            stroke="#000"
            strokeWidth="1.800"
          />
        </svg>
      </button>
    </div>
  </div>
);

// 15 seconds last 6.125 bars at 98 BPM
const QUARTER = 6.125;

const TimeRuler: React.FC = () => (
  <div className="relative mr-[258px] h-[34px] text-xl text-black">
    {Array.from({ length: 13 }, (_, i) => (
      <div
        key={i}
        className="absolute top-0 h-4 w-1 border-b-2 border-l-2 border-[#1e1e1e]"
        style={{ left: pct(i * QUARTER) }}
      >
        <span className="absolute top-1 left-1 leading-6">
          {`${Math.floor(i / 4)}:${String((i % 4) * 15).padStart(2, "0")}`}
        </span>
      </div>
    ))}
    {Array.from({ length: 38 }, (_, i) => (
      <div
        key={i}
        className="absolute top-0 h-1 w-0.5 bg-[#1e1e1e]"
        style={{ left: pct((i * QUARTER) / 3) }}
      />
    ))}
    <svg
      viewBox="0 0 8 8"
      className="absolute top-0.5 left-0 size-2"
      fill="#ee6c26"
      aria-hidden="true"
    >
      <path d="M0 0l8 8H0z" />
    </svg>
  </div>
);

const MasterRow: React.FC = () => (
  <div className="flex h-10">
    <div className="flex min-w-0 flex-1 flex-col">
      <div className="relative z-20 h-1.5 shrink-0 bg-[#5c5c5c]" />
      <div className="relative flex-1">
        <Shades />
        <span className="absolute right-1 bottom-0 z-20 text-4xl leading-[34px] font-medium text-[#484848] tabular-nums">
          1/1
        </span>
      </div>
    </div>
    <div className="ml-1 w-[216px] pt-1.5">
      <div className="flex h-full items-start bg-[#95a3f8] pt-1 pl-1.5">
        <button
          type="button"
          aria-label="Unfold Master"
          className="text-black/65"
        >
          <FoldIcon kind="closed" />
        </button>
        <h3 className="ml-[17px] text-xl leading-[26px] font-semibold text-black/80">
          Master
        </h3>
      </div>
    </div>
    <div className="ml-1 w-[26px] pt-1.5">
      <Meter />
    </div>
  </div>
);

const Arrangement: React.FC = () => (
  <div className="relative mr-2 bg-[#5c5c5c]">
    {tracks.map((t, i) => (
      <TrackRow key={t.id} track={t} first={i === 0} />
    ))}
    <TrackRow track={snares} />
    <MasterRow />
    <div className="pointer-events-none absolute inset-y-0 right-[250px] left-0 z-10">
      <GridLines />
    </div>
    <div className="absolute top-0 left-0 z-20 h-[104px] w-0.5 bg-[#f2b083]" />
  </div>
);

const Dot: React.FC<{ label: string; children: React.ReactNode }> = ({
  label,
  children,
}) => (
  <button
    type="button"
    aria-label={label}
    className="flex size-[38px] items-center justify-center rounded-full bg-[#565656]"
  >
    {children}
  </button>
);

const App: React.FC = () => (
  <div className="min-h-screen bg-[#777777] pb-0.5 font-['Inter',sans-serif]">
    <Toolbar />
    <main className="flex pr-4">
      <div className="flex w-[62px] shrink-0 flex-col justify-between pl-4">
        <Dot label="Show browser">
          <svg viewBox="0 0 22 22" className="size-[22px]" aria-hidden="true">
            <path
              d="M1 2.500a2 2 0 012-2h16a2 2 0 012 2L12 21q-1 1.500-2 0z"
              fill="#8a8a8a"
            />
          </svg>
        </Dot>
        <Dot label="Show groove pool">
          <svg
            viewBox="0 0 26 20"
            className="h-5 w-[26px]"
            fill="none"
            stroke="#8a8a8a"
            strokeWidth="2"
            aria-hidden="true"
          >
            <path d="M1 6C4 3 8 0 13 4s9 3 12-1M1 16c3-3 7-6 12-2s9 3 12-1" />
          </svg>
        </Dot>
      </div>

      <section className="min-w-0 flex-1 rounded-l-lg rounded-tr-lg bg-[#505050] pt-2 pl-2">
        <div className="flex items-center pr-3">
          <Overview />
          <button
            type="button"
            className="ml-2 h-[26px] w-[38px] border-2 border-[#303030] bg-[#f8cd46] text-xl leading-[22px]"
          >
            H
          </button>
          <button
            type="button"
            className="ml-1.5 h-[26px] w-[38px] border-2 border-[#303030] bg-[#f8cd46] text-xl leading-[22px]"
          >
            W
          </button>
        </div>

        <div className="flex">
          <div className="min-w-0 flex-1">
            <BarRuler />
            <div className="relative h-[50px] border-t-2 border-[#5c5c5c]">
              <Shades />
              <div className="absolute inset-0">
                <GridLines />
              </div>
              <LoopBrace />
            </div>
            <div className="h-3.5 bg-[#5c5c5c] pt-1.5">
              <svg
                viewBox="0 0 8 8"
                className="size-2"
                fill="#ee6c26"
                aria-hidden="true"
              >
                <path d="M0 0h8L2 8H0z" />
              </svg>
            </div>
          </div>
          <LocatorControls />
        </div>

        <Arrangement />
        <TimeRuler />
      </section>

      <div className="flex w-[46px] shrink-0 flex-col">
        <div className="flex h-[92px] flex-col gap-2 pl-2">
          <Dot label="Arrangement view">
            <svg viewBox="0 0 22 22" className="size-[22px]" fill="#f8cd46">
              <path d="M0 0h22v4H0zM0 9h22v4H0zM0 18h22v4H0z" />
            </svg>
          </Dot>
          <Dot label="Session view">
            <svg viewBox="0 0 20 22" className="h-[22px] w-5" fill="#8a8a8a">
              <path d="M0 0h4v22H0zM8 0h4v22H8zM16 0h4v22h-4z" />
            </svg>
          </Dot>
        </div>
        <div className="flex flex-1 flex-col justify-between rounded-r-lg bg-[#505050] pt-[22px] pb-[52px]">
          <div className="ml-3 h-[998px] w-3.5 rounded-full bg-[#363636]" />
          <div className="ml-1.5 flex flex-col gap-3">
            {["I·O", "R", "M", "D"].map((label) => (
              <button
                key={label}
                type="button"
                className="size-[26px] rounded-full bg-[#1a2024] text-xs font-semibold text-[#6a6a6a]"
              >
                {label}
              </button>
            ))}
          </div>
        </div>
      </div>
    </main>
  </div>
);

export default App;
